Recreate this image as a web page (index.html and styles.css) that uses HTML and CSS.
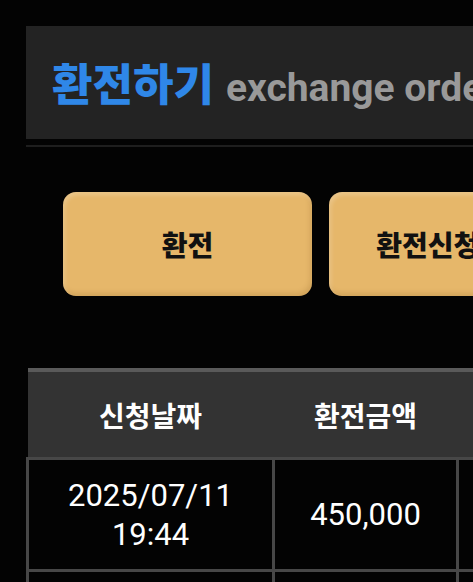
FILE: index.html
```html
<!DOCTYPE html>
<html>
<head>
  <title>환전하기</title>
  <link rel="stylesheet" href="styles.css">
</head>
<body>
  <div class="page">
    <header class="title-bar">
      <h1><span class="title-ko">환전하기</span> <span class="title-en">exchange order</span></h1>
    </header>
    <div class="title-rule"></div>

    <div class="tabs">
      <button class="tab-btn">환전</button>
      <button class="tab-btn">환전신청내역</button>
    </div>

    <table class="history">
      <thead>
        <tr>
          <th class="col-date">신청날짜</th>
          <th class="col-amount">환전금액</th>
          <th class="col-status">상태</th>
        </tr>
      </thead>
      <tbody>
        <tr>
          <td>2025/07/11<br>19:44</td>
          <td>450,000</td>
          <td>대기</td>
        </tr>
        <tr>
          <td>2025/07/10<br>12:10</td>
          <td>300,000</td>
          <td>완료</td>
        </tr>
      </tbody>
    </table>
  </div>
</body>
</html>
```

FILE: styles.css
```css
html, body {
  margin: 0;
  background-color: #030303;
  overflow: hidden;
}
body {
  font-family: Roboto, "Noto Sans CJK KR", sans-serif;
  color: white;
}
.page {
  width: 900px;
  padding: 26px 0 0 26px;
}
.title-bar {
  background-color: #232323;
  height: 113px;
  display: flex;
  align-items: center;
  padding-left: 26px;
}
.title-bar h1 {
  margin: 0;
  font-weight: bold;
  white-space: nowrap;
  line-height: 1;
  padding-top: 6px;
}
.title-ko {
  color: #2f87e8;
  font-size: 44px;
  font-weight: 900;
  margin-right: 4px;
}
.title-en {
  color: #999999;
  font-size: 39px;
}
.title-rule {
  height: 2px;
  margin-top: 6px;
  background-color: #1e1e1e;
}
.tabs {
  display: flex;
  gap: 17px;
  margin: 45px 0 0 37px;
}
.tab-btn {
  width: 249px;
  height: 104px;
  border: none;
  border-radius: 13px;
  background-color: #e6b76a;
  box-shadow: inset 2px 3px 4px rgba(255, 255, 255, 0.22), inset -2px -3px 5px rgba(120, 80, 20, 0.18);
  font-family: Roboto, "Noto Sans CJK KR", sans-serif;
  font-size: 28px;
  font-weight: 900;
  color: #111;
  white-space: nowrap;
}
.history {
  margin-top: 72px;
  border-collapse: collapse;
  border-top: 4px solid #5a5a5a;
}
.history th {
  background-color: #333333;
  height: 85px;
  font-size: 28px;
  font-weight: bold;
  padding: 0;
}
.history td {
  border: 3px solid #474747;
  height: 109px;
  text-align: center;
  font-size: 31px;
  line-height: 39px;
  padding: 0;
}
.col-date {
  width: 246px;
}
.col-amount {
  width: 184px;
}
.col-status {
  width: 200px;
}
```
